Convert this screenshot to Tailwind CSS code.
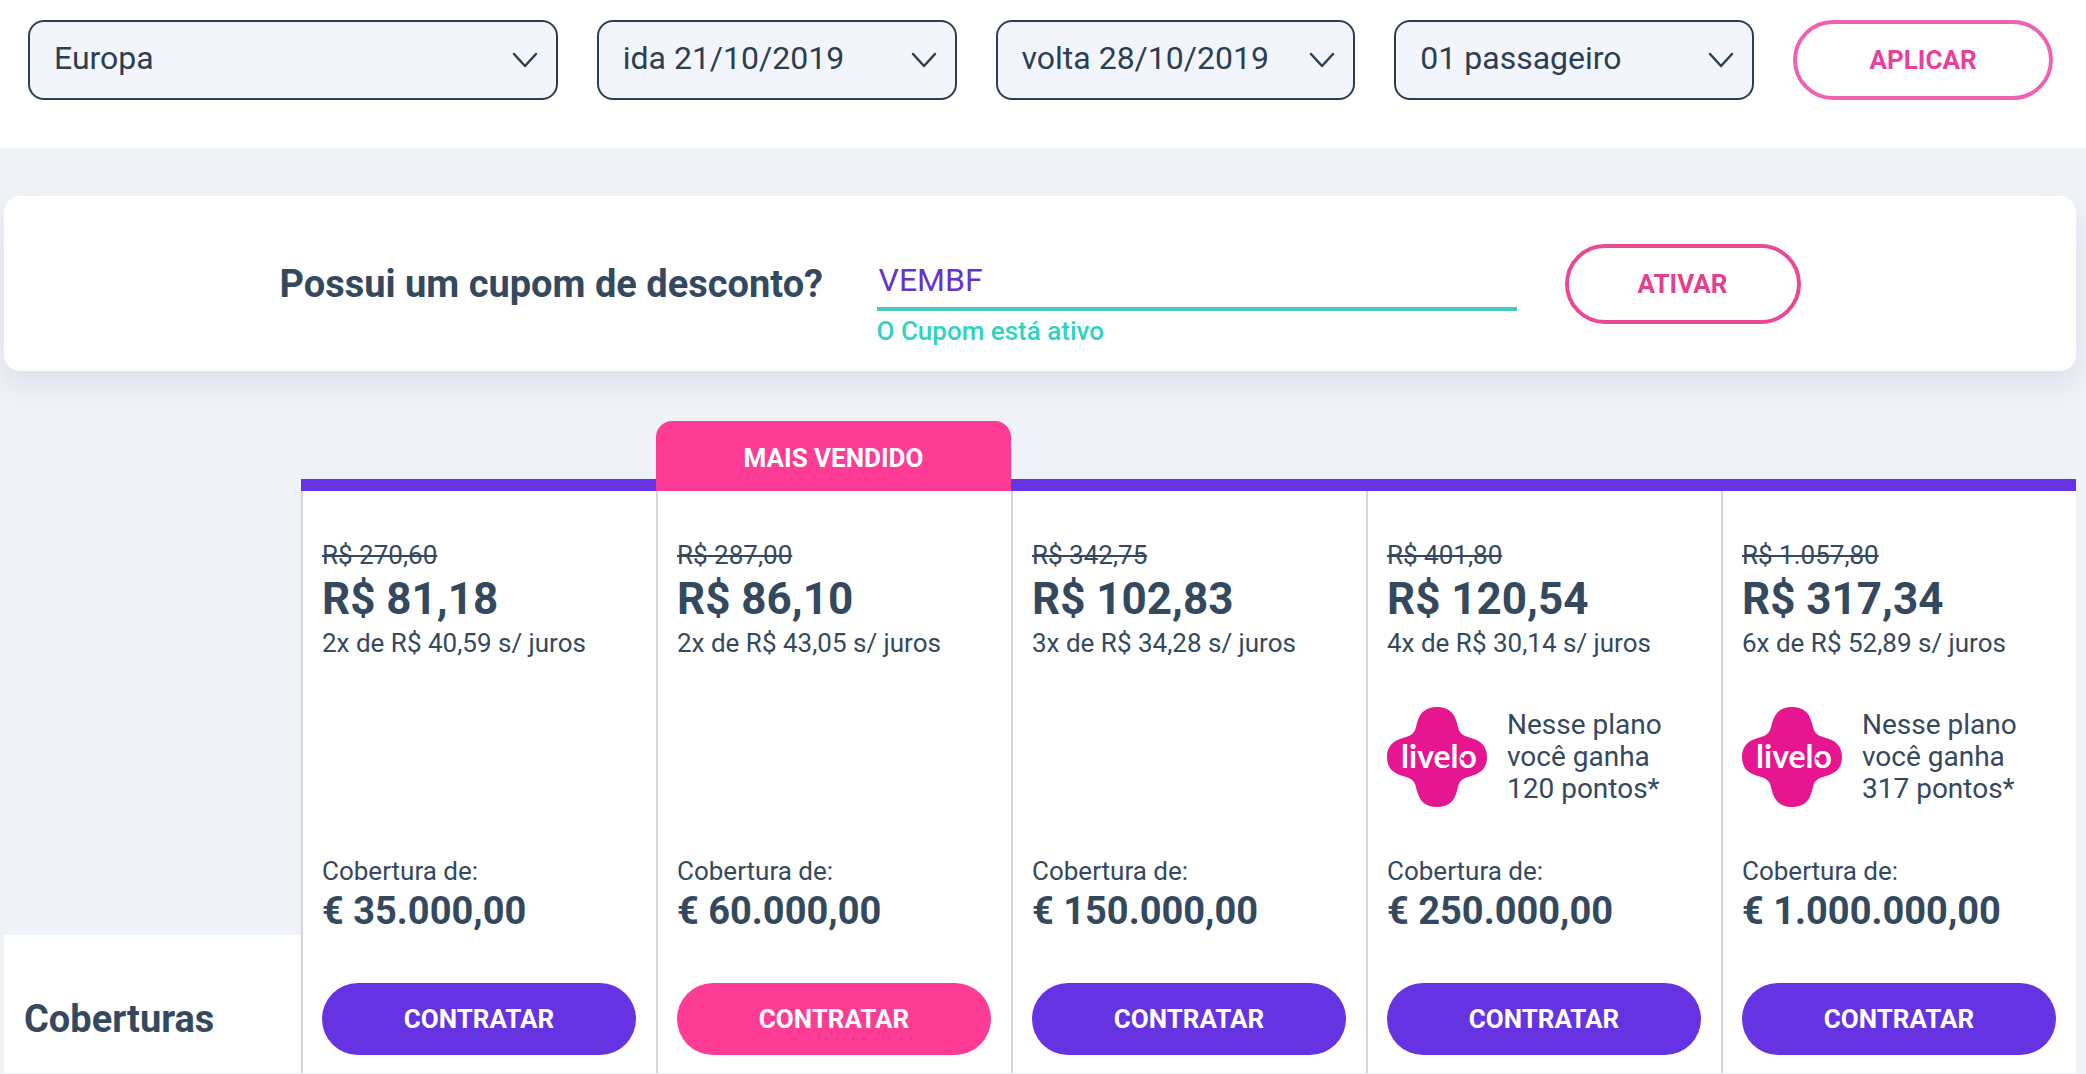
<!DOCTYPE html>
<html lang="pt-BR">
<head>
    <meta charset="UTF-8">
    <meta name="viewport" content="width=device-width, initial-scale=1.0">
    <title>Seguro viagem - Planos</title>
    <script src="https://cdn.jsdelivr.net/npm/@tailwindcss/browser@4"></script>
</head>
<body class="min-h-screen bg-[#eff2f7] font-['Roboto',sans-serif] text-[#34495e]">
    <!-- Icons -->
    <svg class="hidden">
        <symbol id="chevron" viewBox="0 0 26 16">
            <path d="M2 2 L13 14 L24 2" fill="none" stroke="currentColor" stroke-width="2.5" stroke-linecap="round" stroke-linejoin="round" />
        </symbol>
        <symbol id="livelo" viewBox="0 0 100 100">
            <path d="M50 0 C61 0 67 5 70 16 C72 25 73 28 84 31 C95 34 100 40 100 50 C100 60 95 66 84 69 C73 72 72 75 70 84 C67 95 61 100 50 100 C39 100 33 95 30 84 C28 75 27 72 16 69 C5 66 0 60 0 50 C0 40 5 34 16 31 C27 28 28 25 30 16 C33 5 39 0 50 0 Z" fill="#e5168f" />
            <text x="52" y="61" text-anchor="middle" font-family="Lato, sans-serif" font-size="32" font-weight="700" fill="#fff">livelo</text>
            <path d="M58 58 L65 54 M74 51 L80 54" stroke="#e5168f" stroke-width="2" />
        </symbol>
    </svg>

    <!-- Search filters -->
    <header class="bg-white pt-5 pr-[33px] pb-12 pl-7">
        <form class="flex gap-[39px] text-[32px] text-[#2c3e50]">
            <div class="relative flex-[53]">
                <select aria-label="Destino" class="h-20 w-full appearance-none rounded-2xl border-2 border-[#2c3e50] bg-[#f2f6fc] pr-14 pb-1 pl-6">
                    <option>Europa</option>
                </select>
                <svg class="pointer-events-none absolute top-8 right-5 h-4 w-[26px]"><use href="#chevron" /></svg>
            </div>
            <div class="relative flex-[36]">
                <select aria-label="Data de ida" class="h-20 w-full appearance-none rounded-2xl border-2 border-[#2c3e50] bg-[#f2f6fc] pr-14 pb-1 pl-6">
                    <option>ida 21/10/2019</option>
                </select>
                <svg class="pointer-events-none absolute top-8 right-5 h-4 w-[26px]"><use href="#chevron" /></svg>
            </div>
            <div class="relative flex-[36]">
                <select aria-label="Data de volta" class="h-20 w-full appearance-none rounded-2xl border-2 border-[#2c3e50] bg-[#f2f6fc] pr-14 pb-1 pl-6">
                    <option>volta 28/10/2019</option>
                </select>
                <svg class="pointer-events-none absolute top-8 right-5 h-4 w-[26px]"><use href="#chevron" /></svg>
            </div>
            <div class="relative flex-[36]">
                <select aria-label="Passageiros" class="h-20 w-full appearance-none rounded-2xl border-2 border-[#2c3e50] bg-[#f2f6fc] pr-14 pb-1 pl-6">
                    <option>01 passageiro</option>
                </select>
                <svg class="pointer-events-none absolute top-8 right-5 h-4 w-[26px]"><use href="#chevron" /></svg>
            </div>
            <div class="flex-[26]">
                <button type="button" class="block h-20 w-full rounded-full border-4 border-[#ee62b2] text-[26px] font-bold text-[#e83fa0]">APLICAR</button>
            </div>
        </form>
    </header>

    <main class="pt-12 pr-[10px] pl-1">
        <!-- Coupon -->
        <form class="flex items-start justify-center gap-12 rounded-2xl bg-white pt-12 pb-6 shadow-[0_14px_28px_rgba(30,30,60,0.08)]">
            <label for="cupom" class="flex h-20 w-[549px] items-center text-[38px] font-bold whitespace-nowrap">Possui um cupom de desconto?</label>
            <div class="w-[640px]">
                <input id="cupom" type="text" value="VEMBF" class="h-[67px] w-full border-b-4 border-[#45c9c0] pt-2 pl-0.5 text-[32px] text-[#6633cc] outline-none">
                <p class="pt-1 text-[26px] leading-8 font-medium text-[#2fd4bf]">O Cupom está ativo</p>
            </div>
            <button type="button" class="h-20 w-[236px] rounded-full border-4 border-[#ea4a94] text-[26px] font-bold text-[#e5408e]">ATIVAR</button>
        </form>

        <!-- Plans -->
        <table class="mt-[50px] w-full table-fixed border-separate border-spacing-0 text-left text-[26px]">
            <colgroup>
                <col class="w-[297px]">
                <col><col><col><col><col>
            </colgroup>
            <thead>
                <tr class="h-[70px]">
                    <td></td>
                    <td class="border-b-12 border-[#6633e2]"></td>
                    <th class="rounded-t-2xl bg-[#fe3c96] pt-1 text-center font-bold text-white">MAIS VENDIDO</th>
                    <td class="border-b-12 border-[#6633e2]"></td>
                    <td class="border-b-12 border-[#6633e2]"></td>
                    <td class="border-b-12 border-[#6633e2]"></td>
                </tr>
            </thead>
            <tbody>
                <tr class="align-top leading-10">
                    <td></td>
                    <td class="border-l-2 border-[#d5d5da] bg-white pt-11 pl-[19px]">
                        <s class="block">R$ 270,60</s>
                        <strong class="block text-[44px] leading-12">R$ 81,18</strong>
                        <p>2x de R$ 40,59 s/ juros</p>
                    </td>
                    <td class="border-l-2 border-[#d5d5da] bg-white pt-11 pl-[19px]">
                        <s class="block">R$ 287,00</s>
                        <strong class="block text-[44px] leading-12">R$ 86,10</strong>
                        <p>2x de R$ 43,05 s/ juros</p>
                    </td>
                    <td class="border-l-2 border-[#d5d5da] bg-white pt-11 pl-[19px]">
                        <s class="block">R$ 342,75</s>
                        <strong class="block text-[44px] leading-12">R$ 102,83</strong>
                        <p>3x de R$ 34,28 s/ juros</p>
                    </td>
                    <td class="border-l-2 border-[#d5d5da] bg-white pt-11 pl-[19px]">
                        <s class="block">R$ 401,80</s>
                        <strong class="block text-[44px] leading-12">R$ 120,54</strong>
                        <p>4x de R$ 30,14 s/ juros</p>
                    </td>
                    <td class="border-l-2 border-[#d5d5da] bg-white pt-11 pl-[19px]">
                        <s class="block">R$ 1.057,80</s>
                        <strong class="block text-[44px] leading-12">R$ 317,34</strong>
                        <p>6x de R$ 52,89 s/ juros</p>
                    </td>
                </tr>
                <tr class="text-[28px] leading-8">
                    <td></td>
                    <td class="border-l-2 border-[#d5d5da] bg-white"></td>
                    <td class="border-l-2 border-[#d5d5da] bg-white"></td>
                    <td class="border-l-2 border-[#d5d5da] bg-white"></td>
                    <td class="border-l-2 border-[#d5d5da] bg-white py-11 pl-[19px]">
                        <div class="flex items-center gap-5">
                            <svg class="size-[100px] shrink-0"><use href="#livelo" /></svg>
                            <p>Nesse plano<br>você ganha<br>120 pontos*</p>
                        </div>
                    </td>
                    <td class="border-l-2 border-[#d5d5da] bg-white py-11 pl-[19px]">
                        <div class="flex items-center gap-5">
                            <svg class="size-[100px] shrink-0"><use href="#livelo" /></svg>
                            <p>Nesse plano<br>você ganha<br>317 pontos*</p>
                        </div>
                    </td>
                </tr>
                <tr class="align-top leading-10">
                    <td></td>
                    <td class="border-l-2 border-[#d5d5da] bg-white pb-1 pl-[19px]">
                        <p>Cobertura de:</p>
                        <strong class="block text-[38px]">€ 35.000,00</strong>
                    </td>
                    <td class="border-l-2 border-[#d5d5da] bg-white pb-1 pl-[19px]">
                        <p>Cobertura de:</p>
                        <strong class="block text-[38px]">€ 60.000,00</strong>
                    </td>
                    <td class="border-l-2 border-[#d5d5da] bg-white pb-1 pl-[19px]">
                        <p>Cobertura de:</p>
                        <strong class="block text-[38px]">€ 150.000,00</strong>
                    </td>
                    <td class="border-l-2 border-[#d5d5da] bg-white pb-1 pl-[19px]">
                        <p>Cobertura de:</p>
                        <strong class="block text-[38px]">€ 250.000,00</strong>
                    </td>
                    <td class="border-l-2 border-[#d5d5da] bg-white pb-1 pl-[19px]">
                        <p>Cobertura de:</p>
                        <strong class="block text-[38px]">€ 1.000.000,00</strong>
                    </td>
                </tr>
                <tr>
                    <th class="bg-white pt-12 pb-[18px] pl-5 text-[38px] font-bold">Coberturas</th>
                    <td class="border-l-2 border-[#d5d5da] bg-white pt-12 pr-5 pb-[18px] pl-[19px]">
                        <button type="button" class="block h-[72px] w-full rounded-full bg-[#6633e2] font-bold text-white">CONTRATAR</button>
                    </td>
                    <td class="border-l-2 border-[#d5d5da] bg-white pt-12 pr-5 pb-[18px] pl-[19px]">
                        <button type="button" class="block h-[72px] w-full rounded-full bg-[#fe3c96] font-bold text-white">CONTRATAR</button>
                    </td>
                    <td class="border-l-2 border-[#d5d5da] bg-white pt-12 pr-5 pb-[18px] pl-[19px]">
                        <button type="button" class="block h-[72px] w-full rounded-full bg-[#6633e2] font-bold text-white">CONTRATAR</button>
                    </td>
                    <td class="border-l-2 border-[#d5d5da] bg-white pt-12 pr-5 pb-[18px] pl-[19px]">
                        <button type="button" class="block h-[72px] w-full rounded-full bg-[#6633e2] font-bold text-white">CONTRATAR</button>
                    </td>
                    <td class="border-l-2 border-[#d5d5da] bg-white pt-12 pr-5 pb-[18px] pl-[19px]">
                        <button type="button" class="block h-[72px] w-full rounded-full bg-[#6633e2] font-bold text-white">CONTRATAR</button>
                    </td>
                </tr>
            </tbody>
        </table>
    </main>
</body>
</html>
